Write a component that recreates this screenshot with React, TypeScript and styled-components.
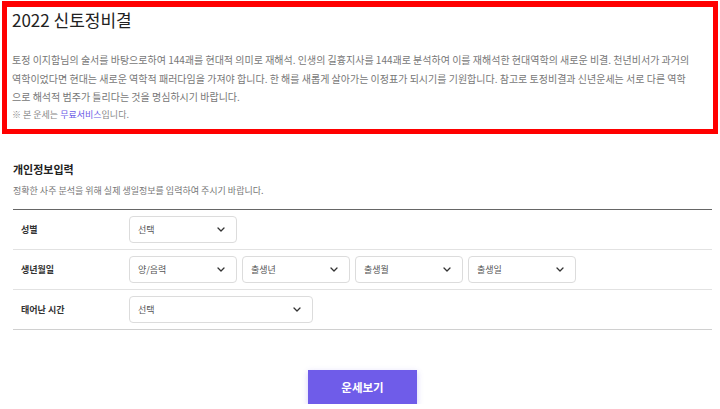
import React from 'react';
import styled, { createGlobalStyle } from 'styled-components';

const GlobalStyle = createGlobalStyle`
  html, body {
    margin: 0;
    padding: 0;
    background: #ffffff;
  }
  body {
    font-family: "Noto Sans CJK KR", "Noto Sans", sans-serif;
    color: #222;
  }
`;

const Page = styled.div`
  width: 720px;
  padding-top: 1px;
`;

const Highlight = styled.section`
  margin: 0 2px 0 2px;
  border: 5px solid #ff0000;
  border-top-width: 6px;
  padding: 1px 6px 7px 5px;
`;

const Title = styled.h1`
  margin: 0;
  font-size: 17px;
  font-weight: 400;
  line-height: 24px;
  color: #222;
`;

const Desc = styled.p`
  margin: 19px 0 0;
  font-size: 10px;
  line-height: 18.5px;
  color: #777;
`;

const Note = styled.p`
  margin: 1px 0 0;
  font-size: 9px;
  line-height: 14px;
  color: #888;
`;

const Free = styled.span`
  color: #6c5ce7;
`;

const Form = styled.section`
  padding: 0 8px 0 13px;
`;

const FormTitle = styled.h2`
  margin: 27px 0 0;
  font-size: 11px;
  font-weight: 700;
  line-height: 16px;
  color: #222;
`;

const FormSub = styled.p`
  margin: 7px 0 0;
  font-size: 9px;
  line-height: 14px;
  color: #777;
`;

const Table = styled.div`
  margin-top: 11px;
  border-top: 1px solid #666;
`;

const Row = styled.div`
  display: flex;
  align-items: center;
  height: 39px;
  border-bottom: 1px solid #e2e2e2;

  &:last-child {
    border-bottom-color: #d0d0d0;
  }
`;

const Label = styled.div`
  width: 108px;
  padding-left: 8px;
  font-size: 9px;
  font-weight: 700;
  color: #333;
`;

const Fields = styled.div`
  display: flex;
  gap: 5px;
`;

const SelectBox = styled.div<{ $w: number }>`
  box-sizing: border-box;
  width: ${p => p.$w}px;
  height: 27px;
  display: flex;
  align-items: center;
  justify-content: space-between;
  padding: 0 11px 0 8px;
  border: 1px solid #dcdcdc;
  border-radius: 4px;
  background: #fff;
  font-size: 9px;
  color: #555;
`;

const Chevron = () => (
  <svg width="8" height="5" viewBox="0 0 8 5" fill="none">
    <path d="M1 1l3 3 3-3" stroke="#333" strokeWidth="1.3" strokeLinecap="round" strokeLinejoin="round" />
  </svg>
);

const Select = ({ label, w = 108 }: { label: string; w?: number }) => (
  <SelectBox $w={w}>
    <span>{label}</span>
    <Chevron />
  </SelectBox>
);

const Actions = styled.div`
  display: flex;
  justify-content: center;
  margin-top: 40px;
`;

const SubmitButton = styled.button`
  width: 109px;
  height: 34px;
  border: none;
  background: #6f5ce9;
  color: #fff;
  font-family: "Noto Sans CJK KR", sans-serif;
  font-size: 11.5px;
  font-weight: 700;
  box-shadow: 0 2px 6px rgba(108, 92, 231, 0.3);
  cursor: pointer;
`;

const App: React.FC = () => {
  return (
    <Page>
      <GlobalStyle />
      <Highlight>
        <Title>2022 신토정비결</Title>
        <Desc>
          토정 이지함님의 술서를 바탕으로하여 144괘를 현대적 의미로 재해석. 인생의 길흉지사를 144괘로 분석하여 이를 재해석한 현대역학의 새로운 비결. 천년비서가 과거의
          <br />
          역학이었다면 현대는 새로운 역학적 패러다임을 가져야 합니다. 한 해를 새롭게 살아가는 이정표가 되시기를 기원합니다. 참고로 토정비결과 신년운세는 서로 다른 역학
          <br />
          으로 해석적 범주가 틀리다는 것을 명심하시기 바랍니다.
        </Desc>
        <Note>
          ※ 본 운세는 <Free>무료서비스</Free>입니다.
        </Note>
      </Highlight>
      <Form>
        <FormTitle>개인정보입력</FormTitle>
        <FormSub>정확한 사주 분석을 위해 실제 생일정보를 입력하여 주시기 바랍니다.</FormSub>
        <Table>
          <Row>
            <Label>성별</Label>
            <Fields>
              <Select label="선택" />
            </Fields>
          </Row>
          <Row>
            <Label>생년월일</Label>
            <Fields>
              <Select label="양/음력" />
              <Select label="출생년" />
              <Select label="출생월" />
              <Select label="출생일" />
            </Fields>
          </Row>
          <Row>
            <Label>태어난 시간</Label>
            <Fields>
              <Select label="선택" w={184} />
            </Fields>
          </Row>
        </Table>
        <Actions>
          <SubmitButton>운세보기</SubmitButton>
        </Actions>
      </Form>
    </Page>
  );
};

export default App;
